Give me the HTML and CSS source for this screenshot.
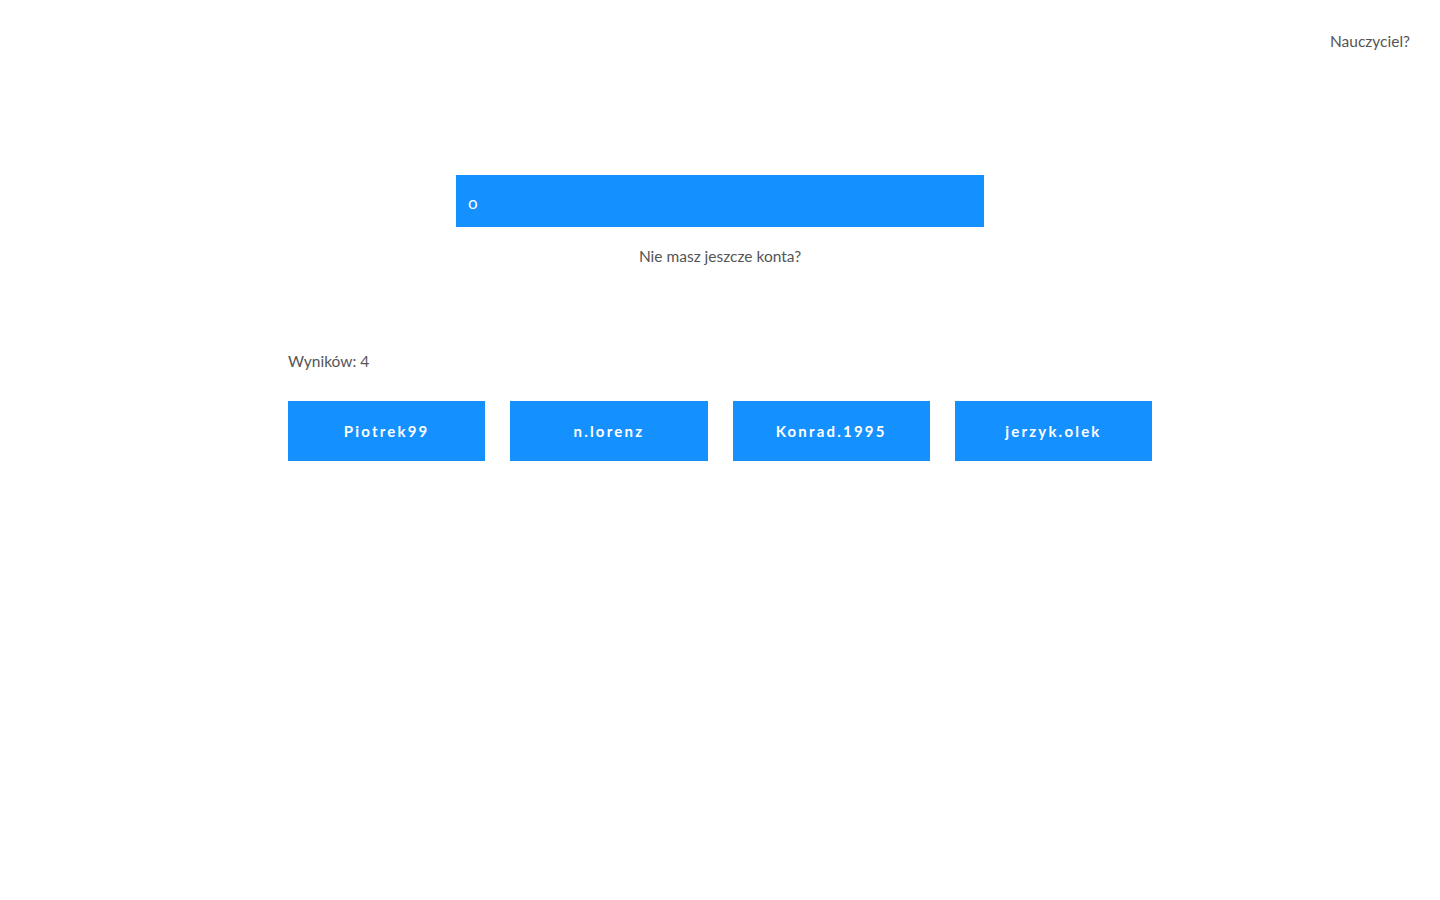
FILE: index.html
```html
<!DOCTYPE html>
<html lang="pl">
<head>
<meta charset="utf-8">
<title>Logowanie</title>
<link rel="stylesheet" href="styles.css">
</head>
<body>
<header class="top">
  <a class="teacher" href="#">Nauczyciel?</a>
</header>
<main class="main">
  <section class="search">
    <input class="search-input" type="text" value="o" autofocus>
    <a class="register" href="#">Nie masz jeszcze konta?</a>
  </section>
  <section class="results">
    <p class="count">Wyników: 4</p>
    <div class="grid">
      <button class="user">Piotrek99</button>
      <button class="user">n.lorenz</button>
      <button class="user">Konrad.1995</button>
      <button class="user">jerzyk.olek</button>
    </div>
  </section>
</main>
</body>
</html>
```
FILE: styles.css
```css
html, body {
  margin: 0;
  padding: 0;
  background: #fff;
  font-family: "Lato", "Open Sans", sans-serif;
  color: #555;
}
.top {
  display: flex;
  justify-content: flex-end;
  padding: 31px 30px 0 0;
  height: 21px;
}
.teacher {
  color: #555;
  text-decoration: none;
  font-size: 15.5px;
  line-height: 20px;
}
.main {
  display: flex;
  flex-direction: column;
  align-items: center;
}
.search {
  margin-top: 123px;
  display: flex;
  flex-direction: column;
  align-items: center;
}
.search-input {
  box-sizing: border-box;
  width: 528px;
  height: 52px;
  border: none;
  outline: none;
  background: #1490ff;
  color: #fff;
  caret-color: #fff;
  padding: 2px 12px 0;
  font-family: inherit;
  font-size: 17px;
}
.register {
  margin-top: 19px;
  color: #555;
  text-decoration: none;
  font-size: 15.5px;
  line-height: 20px;
}
.results {
  width: 864px;
  margin-top: 85px;
}
.count {
  margin: 0;
  font-size: 15.5px;
  line-height: 20px;
}
.grid {
  margin-top: 30px;
  display: grid;
  grid-template-columns: repeat(4, 1fr);
  column-gap: 25px;
}
.user {
  height: 60px;
  border: none;
  background: #1490ff;
  color: #fff;
  font-family: inherit;
  font-weight: 700;
  font-size: 15px;
  letter-spacing: 2.2px;
  cursor: pointer;
}
```
